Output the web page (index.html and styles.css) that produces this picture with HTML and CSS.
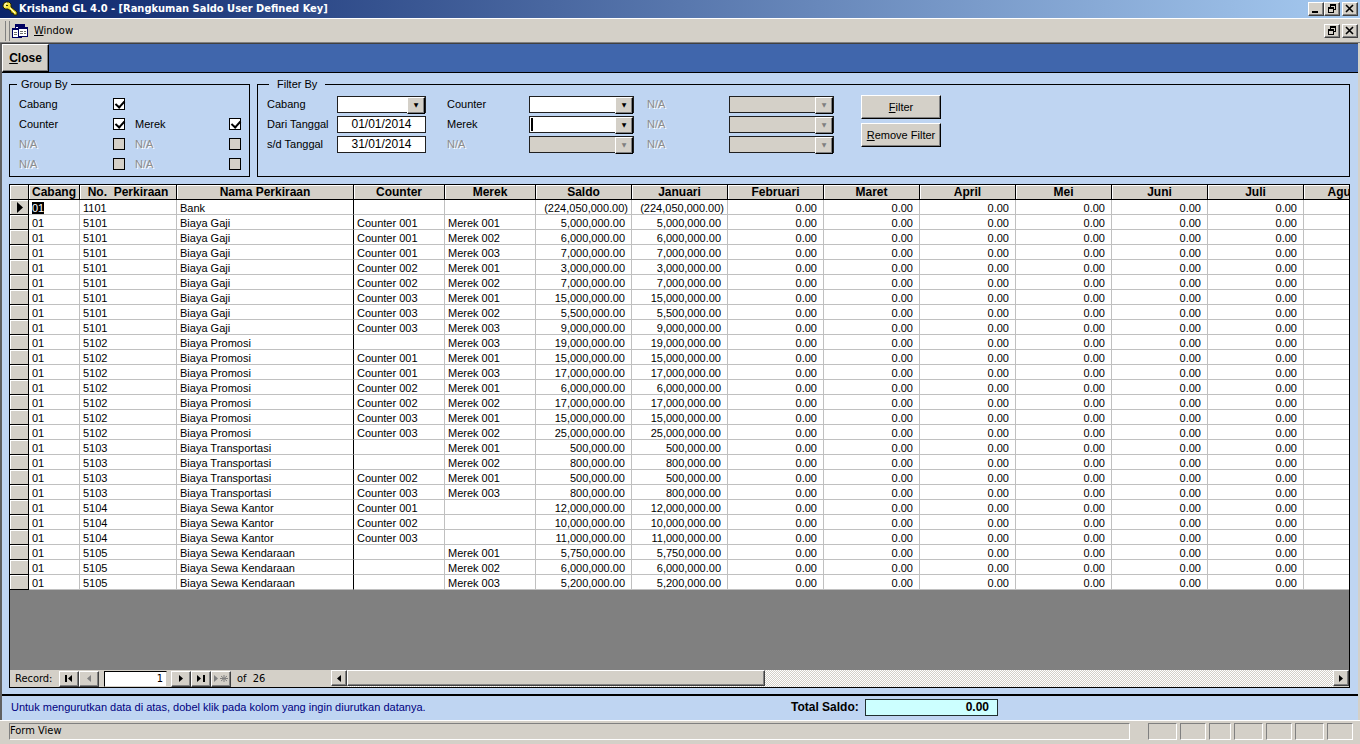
FILE: index.html
```html
<!DOCTYPE html>
<html lang="id">

<head>
    <meta charset="UTF-8">
    <meta name="viewport" content="width=device-width, initial-scale=1.0">
    <title>Krishand GL 4.0</title>
    <link rel="stylesheet" href="styles.css">
</head>

<body>
    <header class="titlebar">
        <svg class="key" width="16" height="16" viewBox="0 0 16 16">
            <path d="M2 2l2-1h3l2 2v3l6 5v3h-3l-1-2H9v-2L6 8H3L1 6V4z" fill="#f4e43a" stroke="#222200"/>
            <path d="M3 6V3l2-1M8 7l5 5" fill="none" stroke="#fffde0"/>
            <path d="M4 4h2v1H4z" fill="#333300"/>
        </svg>
        <h1>Krishand GL 4.0 - [Rangkuman Saldo User Defined Key]</h1>
        <div class="winbtns">
            <button class="winbtn" aria-label="Minimize"><svg width="12" height="10"><path d="M2 7h6v2H2z"/></svg></button>
            <button class="winbtn" aria-label="Restore"><svg width="12" height="10"><path d="M4 0h6v6H8V5h1V2H5v1H4zM2 3h6v6H2zM3 5v3h4V5z" fill-rule="evenodd"/></svg></button>
            <button class="winbtn last" aria-label="Close window"><svg width="12" height="10"><path d="M2 1l7 7M9 1L2 8" stroke="#000" stroke-width="1.6"/></svg></button>
        </div>
    </header>
    <nav class="menubar">
        <span class="grip"></span>
        <svg width="17" height="16" viewBox="0 0 17 16">
            <path d="M3 1h10v9H3z" fill="#000060"/>
            <path d="M4 4h8v5H4z" fill="#fff"/>
            <path d="M0 5h10v10H0z" fill="#000060"/>
            <path d="M1 7h8v7H1z" fill="#fff"/>
            <path d="M6 4h10v10H6z" fill="#000060"/>
            <path d="M7 6h8v7H7z" fill="#fff"/>
            <path d="M2 9.500h3M2 11.500h3M8 8.500h3M12 8.500h2M8 10.500h3M12 10.500h2" stroke="#707070"/>
        </svg>
        <a class="menu-item" href="#"><u>W</u>indow</a>
        <div class="winbtns">
            <button class="winbtn" aria-label="Restore form"><svg width="12" height="10"><path d="M4 0h6v6H8V5h1V2H5v1H4zM2 3h6v6H2zM3 5v3h4V5z" fill-rule="evenodd"/></svg></button>
            <button class="winbtn last" aria-label="Close form"><svg width="12" height="10"><path d="M2 1l7 7M9 1L2 8" stroke="#000" stroke-width="1.6"/></svg></button>
        </div>
    </nav>

    <main class="form">
        <div class="toolbar">
            <button class="btn close"><u>C</u>lose</button>
        </div>

        <div class="boxes">
            <fieldset class="box group">
                <legend>Group By</legend>
                <div class="group-grid">
                    <label for="g1">Cabang</label><input type="checkbox" id="g1" checked><span></span><span></span>
                    <label for="g2">Counter</label><input type="checkbox" id="g2" checked>
                    <label for="g3">Merek</label><input type="checkbox" id="g3" checked>
                    <label class="off" for="g4">N/A</label><input type="checkbox" id="g4" disabled>
                    <label class="off" for="g5">N/A</label><input type="checkbox" id="g5" disabled>
                    <label class="off" for="g6">N/A</label><input type="checkbox" id="g6" disabled>
                    <label class="off" for="g7">N/A</label><input type="checkbox" id="g7" disabled>
                </div>
            </fieldset>
            <fieldset class="box filter">
                <legend>Filter By</legend>
                <div class="filter-body">
                    <div class="filter-grid">
                        <label for="f1">Cabang</label><span class="combo"><select id="f1"><option></option></select></span>
                        <label for="f2">Counter</label><span class="combo"><select id="f2"><option></option></select></span>
                        <label class="off" for="f3">N/A</label><span class="combo"><select id="f3" disabled><option></option></select></span>
                        <label for="f4">Dari Tanggal</label><input class="date" type="text" id="f4" value="01/01/2014">
                        <label for="f5">Merek</label><span class="combo active"><select id="f5"><option></option></select></span>
                        <label class="off" for="f6">N/A</label><span class="combo"><select id="f6" disabled><option></option></select></span>
                        <label for="f7">s/d Tanggal</label><input class="date" type="text" id="f7" value="31/01/2014">
                        <label class="off" for="f8">N/A</label><span class="combo"><select id="f8" disabled><option></option></select></span>
                        <label class="off" for="f9">N/A</label><span class="combo"><select id="f9" disabled><option></option></select></span>
                    </div>
                    <div class="filter-btns">
                        <button class="btn"><u>F</u>ilter</button>
                        <button class="btn"><u>R</u>emove Filter</button>
                    </div>
                </div>
            </fieldset>
        </div>

        <section class="sheet">
            <div class="sheet-view">
                <table>
                    <colgroup>
                        <col class="c-sel"><col class="c-cab"><col class="c-no"><col class="c-nama">
                        <col class="c-key"><col class="c-key">
                        <col class="c-num" span="9">
                    </colgroup>
                    <thead>
                        <tr>
                            <th></th><th>Cabang</th><th>No.&nbsp; Perkiraan</th><th>Nama Perkiraan</th><th>Counter</th><th>Merek</th>
                            <th>Saldo</th><th>Januari</th><th>Februari</th><th>Maret</th><th>April</th><th>Mei</th><th>Juni</th><th>Juli</th><th>Agustus</th>
                        </tr>
                    </thead>
                    <tbody id="rows"></tbody>
                </table>
            </div>
            <div class="recordbar">
                <label class="rec-label" for="rec">Record:</label>
                <button class="nav" aria-label="First"><svg width="12" height="9"><path d="M2 1h2v7H2zM9 1v7L5 4.500z"/></svg></button>
                <button class="nav" aria-label="Previous" disabled><svg width="12" height="9"><path d="M8 1v7L4 4.500z"/></svg></button>
                <input class="rec" type="text" id="rec" value="1">
                <button class="nav" aria-label="Next"><svg width="12" height="9"><path d="M4 1v7l4-3.500z"/></svg></button>
                <button class="nav" aria-label="Last"><svg width="12" height="9"><path d="M2 1v7l4-3.500zM8 1h2v7H8z"/></svg></button>
                <button class="nav" aria-label="New" disabled><svg width="14" height="9"><path d="M0 1v7l4-3.500z"/><path d="M6 4.500h8M10 1v7M7 2l6 5M13 2L7 7" stroke="#808080"/></svg></button>
                <span class="rec-count">of&nbsp; 26</span>
                <div class="scroll">
                    <button class="nav arrow" aria-label="Scroll left"><svg width="8" height="9"><path d="M6 1v7L2 4.500z"/></svg></button>
                    <div class="track"><div class="thumb"></div></div>
                    <button class="nav arrow" aria-label="Scroll right"><svg width="8" height="9"><path d="M2 1v7l4-3.500z"/></svg></button>
                </div>
            </div>
        </section>

        <footer class="totals">
            <p class="hint">Untuk mengurutkan data di atas, dobel klik pada kolom yang ingin diurutkan datanya.</p>
            <label class="total-label" for="total">Total Saldo:</label>
            <input class="total" type="text" id="total" value="0.00" readonly>
        </footer>
    </main>

    <div class="statusbar">
        <span class="panel main-panel">Form View</span>
        <span class="panel w29"></span><span class="panel w26"></span><span class="panel w22"></span><span class="panel w29"></span>
        <span class="panel w26"></span><span class="panel w29"></span><span class="panel w26"></span>
    </div>
    <script src="script.js"></script>
</body>
</html>
```

FILE: styles.css
```css
* {
    box-sizing: border-box;
}
body {
    margin: 0;
    height: 100vh;
    display: flex;
    flex-direction: column;
    overflow: hidden;
    background-color: #d4d0c8;
    color: #000;
    font-family: "Liberation Sans", Arial, sans-serif;
    font-size: 11px;
    line-height: 14px;
}
button, input, select {
    font: inherit;
    color: inherit;
    margin: 0;
    padding: 0;
    border-radius: 0;
    outline: none;
}
svg {
    display: block;
}

/* title + menu */
.titlebar {
    display: flex;
    align-items: center;
    height: 18px;
    padding: 0 2px;
    background: linear-gradient(to right, #0a246a, #a6caf0);
}
.titlebar h1 {
    flex: 1;
    margin: 0 0 0 1px;
    color: #fff;
    font-family: "DejaVu Sans Condensed", "DejaVu Sans", sans-serif;
    font-size: 11px;
    font-weight: bold;
}
.winbtns {
    display: flex;
    margin-left: auto;
}
.winbtn {
    width: 16px;
    height: 14px;
    display: flex;
    align-items: center;
    justify-content: center;
    background-color: #d4d0c8;
    border: 1px solid;
    border-color: #fff #404040 #404040 #fff;
    box-shadow: inset -1px -1px #808080;
}
.winbtn.last {
    margin-left: 2px;
}
.menubar {
    display: flex;
    align-items: center;
    height: 25px;
    padding: 1px 2px 0 5px;
    border-top: 1px solid #fff;
    border-bottom: 1px solid #808080;
}
.grip {
    width: 5px;
    height: 20px;
    margin-right: 2px;
    border-left: 1px solid #808080;
    border-right: 1px solid #808080;
}
.menu-item {
    margin-left: 5px;
    color: #000;
    text-decoration: none;
    font-family: "DejaVu Sans Condensed", "DejaVu Sans", sans-serif;
}

/* form */
.form {
    flex: 1;
    min-height: 0;
    display: flex;
    flex-direction: column;
    margin-right: 2px;
    border-top: 1px solid #404040;
    border-left: 2px solid #606060;
    background-color: #bfd5f2;
}
.toolbar {
    height: 29px;
    background-color: #4066ac;
    border-bottom: 1px solid #000;
}
.btn {
    background-color: #d4d0c8;
    border: 1px solid;
    border-color: #fff #000 #000 #fff;
    box-shadow: inset -1px -1px #808080;
    height: 24px;
}
.btn.close {
    width: 47px;
    height: 28px;
    font-size: 12px;
    font-weight: bold;
}
.boxes {
    display: flex;
    gap: 7px;
    padding: 4px 8px 0 7px;
}
.box {
    height: 100px;
    min-width: 0;
    margin: 0;
    padding: 0 9px;
    border: 1px solid #000;
}
.box legend {
    height: 14px;
    padding: 0 4px;
}
.group {
    width: 241px;
    flex: none;
}
.group legend {
    margin-left: -2px;
}
.filter {
    flex: 1;
}
.filter legend {
    padding: 0 8px;
    margin-left: 2px;
}
.group-grid {
    display: grid;
    grid-template-columns: 94px 22px 94px 12px;
    grid-auto-rows: 20px;
    align-items: center;
    padding-top: 3px;
}
.off {
    color: #8c8c8c;
    text-shadow: 1px 1px #fff;
}
input[type=checkbox] {
    appearance: none;
    position: relative;
    width: 12px;
    height: 12px;
    background-color: #fff;
    border: 1px solid #000;
}
input[type=checkbox]:disabled {
    background-color: #d4d0c8;
}
input[type=checkbox]:checked::after {
    content: "";
    position: absolute;
    left: 3px;
    top: 0;
    width: 4px;
    height: 7px;
    border: solid #000;
    border-width: 0 2px 2px 0;
    transform: rotate(42deg);
}
.filter-body {
    display: flex;
    gap: 27px;
    padding-top: 3px;
}
.filter-grid {
    display: grid;
    grid-template-columns: 70px 110px 82px 118px 82px 105px;
    grid-auto-rows: 20px;
    align-items: center;
}
.combo {
    position: relative;
    width: 105px;
    height: 17px;
}
.combo:nth-child(2) {
    width: 89px;
}
.combo select {
    display: block;
    appearance: none;
    width: 100%;
    height: 17px;
    background-color: #fff;
    border: 1px solid #202020;
}
.combo select:disabled {
    background-color: #d4d0c8;
    opacity: 1;
}
/* drop-down button over the right end of the select */
.combo::after {
    content: "▼";
    position: absolute;
    top: 1px;
    right: 1px;
    width: 16px;
    height: 15px;
    border: 1px solid;
    border-color: #fff #000 #000 #fff;
    box-shadow: inset -1px -1px #808080;
    background-color: #d4d0c8;
    font-family: "DejaVu Sans", sans-serif;
    font-size: 6px;
    line-height: 14px;
    text-align: center;
    pointer-events: none;
}
.combo:has(:disabled)::after {
    color: #808080;
}
.combo.active::before {
    content: "";
    position: absolute;
    left: 2px;
    top: 2px;
    width: 2px;
    height: 13px;
    background-color: #000;
}
.date {
    width: 89px;
    height: 17px;
    font-size: 12px;
    text-align: center;
    background-color: #fff;
    border: 1px solid #202020;
}
.filter-btns {
    display: flex;
    flex-direction: column;
    gap: 4px;
    width: 80px;
    padding-top: 1px;
}

/* datasheet */
.sheet {
    flex: 1;
    min-height: 0;
    display: flex;
    flex-direction: column;
    margin: 7px 8px 0 7px;
    border: 1px solid #000;
    background-color: #808080;
}
.sheet-view {
    flex: 1;
    min-height: 0;
    overflow: hidden;
}
table {
    width: 1389px;
    table-layout: fixed;
    border-collapse: separate;
    border-spacing: 0;
}
.c-sel { width: 19px; }
.c-cab { width: 51px; }
.c-no { width: 97px; }
.c-nama { width: 177px; }
.c-key { width: 91px; }
.c-num { width: 96px; }
th {
    height: 15px;
    padding: 0;
    background-color: #d4d0c8;
    border-right: 1px solid #000;
    border-bottom: 1px solid #000;
    box-shadow: inset 1px 1px #fff;
    font-size: 12px;
    line-height: 14px;
    white-space: nowrap;
}
td {
    height: 15px;
    padding: 2px 3px 0;
    background-color: #fff;
    border-right: 1px solid #c0c0c0;
    border-bottom: 1px solid #c0c0c0;
    line-height: 12px;
    white-space: nowrap;
}
td:first-child {
    padding: 0 0 0 7px;
    background-color: #d4d0c8;
    border-color: #000;
    box-shadow: inset 1px 1px #fff;
}
td:nth-child(4) {
    border-right-color: #000;
}
td.num {
    padding-right: 6px;
    text-align: right;
}
td.neg {
    padding-right: 3px;
}
.picked {
    background-color: #000;
    color: #fff;
}

/* record navigator and scrollbar */
.recordbar {
    display: flex;
    align-items: center;
    height: 17px;
    padding-left: 5px;
    background-color: #d4d0c8;
    font-family: "DejaVu Sans Condensed", "DejaVu Sans", sans-serif;
}
.rec-label {
    width: 44px;
}
.nav {
    width: 20px;
    height: 16px;
    flex: none;
    display: flex;
    align-items: center;
    justify-content: center;
    background-color: #d4d0c8;
    border: 1px solid;
    border-color: #fff #404040 #404040 #fff;
    box-shadow: inset -1px -1px #808080;
}
.nav:disabled {
    fill: #808080;
}
.rec {
    width: 63px;
    height: 16px;
    margin: 0 4px 0 5px;
    padding-right: 3px;
    text-align: right;
    background-color: #fff;
    border: 1px solid;
    border-color: #000 #d4d0c8 #d4d0c8 #000;
}
.rec-count {
    width: 94px;
    margin-left: 6px;
}
.scroll {
    flex: 1;
    display: flex;
    height: 17px;
}
.nav.arrow {
    width: 16px;
}
.track {
    flex: 1;
    background: repeating-conic-gradient(#fff 0 25%, #d4d0c8 0 50%) 0 0 / 2px 2px;
}
.thumb {
    width: 42.4%;
    height: 16px;
    background-color: #d4d0c8;
    border: 1px solid;
    border-color: #fff #404040 #404040 #fff;
    box-shadow: inset -1px -1px #808080;
}

/* totals + status */
.totals {
    display: flex;
    align-items: center;
    height: 26px;
    margin-top: 6px;
    padding: 0 0 2px 9px;
    border-top: 2px solid #000;
}
.hint {
    width: 780px;
    margin: 0;
    color: #000080;
}
.total-label {
    width: 74px;
    font-size: 12px;
    font-weight: bold;
}
.total {
    width: 133px;
    height: 17px;
    padding-right: 8px;
    text-align: right;
    font-size: 12px;
    font-weight: bold;
    background-color: #cff;
    border: 1px solid #203030;
}
.statusbar {
    display: flex;
    gap: 3px;
    height: 24px;
    padding: 2px 7px 4px 9px;
    border-top: 1px solid #fff;
    font-family: "DejaVu Sans Condensed", "DejaVu Sans", sans-serif;
}
.panel {
    border: 1px solid;
    border-color: #808080 #fff #fff #808080;
}
.main-panel {
    flex: 1;
    margin-right: 15px;
}
.w22 { width: 22px; }
.w26 { width: 26px; }
.w29 { width: 29px; }
```

FILE: script.js
```js
// no, nama, counter, merek, saldo
const data = [
    ["1101", "Bank", "", "", -224050000],
    ["5101", "Biaya Gaji", "001", "001", 5000000],
    ["5101", "Biaya Gaji", "001", "002", 6000000],
    ["5101", "Biaya Gaji", "001", "003", 7000000],
    ["5101", "Biaya Gaji", "002", "001", 3000000],
    ["5101", "Biaya Gaji", "002", "002", 7000000],
    ["5101", "Biaya Gaji", "003", "001", 15000000],
    ["5101", "Biaya Gaji", "003", "002", 5500000],
    ["5101", "Biaya Gaji", "003", "003", 9000000],
    ["5102", "Biaya Promosi", "", "003", 19000000],
    ["5102", "Biaya Promosi", "001", "001", 15000000],
    ["5102", "Biaya Promosi", "001", "003", 17000000],
    ["5102", "Biaya Promosi", "002", "001", 6000000],
    ["5102", "Biaya Promosi", "002", "002", 17000000],
    ["5102", "Biaya Promosi", "003", "001", 15000000],
    ["5102", "Biaya Promosi", "003", "002", 25000000],
    ["5103", "Biaya Transportasi", "", "001", 500000],
    ["5103", "Biaya Transportasi", "", "002", 800000],
    ["5103", "Biaya Transportasi", "002", "001", 500000],
    ["5103", "Biaya Transportasi", "003", "003", 800000],
    ["5104", "Biaya Sewa Kantor", "001", "", 12000000],
    ["5104", "Biaya Sewa Kantor", "002", "", 10000000],
    ["5104", "Biaya Sewa Kantor", "003", "", 11000000],
    ["5105", "Biaya Sewa Kendaraan", "", "001", 5750000],
    ["5105", "Biaya Sewa Kendaraan", "", "002", 6000000],
    ["5105", "Biaya Sewa Kendaraan", "", "003", 5200000]
];

function numCell(n) {
    const text = Math.abs(n).toLocaleString("en-US", { minimumFractionDigits: 2 });
    return n < 0 ? `<td class="num neg">(${text})</td>` : `<td class="num">${text}</td>`;
}

document.getElementById("rows").innerHTML = data.map((r, i) => {
    const marker = i === 0 ? '<svg width="7" height="11"><path d="M0 0v11l6-5.500z"/></svg>' : "";
    const cabang = i === 0 ? '<span class="picked">01</span>' : "01";
    return `<tr><td>${marker}</td><td>${cabang}</td><td>${r[0]}</td><td>${r[1]}</td>
        <td>${r[2] && "Counter " + r[2]}</td><td>${r[3] && "Merek " + r[3]}</td>
        ${numCell(r[4])}${numCell(r[4])}${numCell(0).repeat(6)}<td></td></tr>`;
}).join("");
```
